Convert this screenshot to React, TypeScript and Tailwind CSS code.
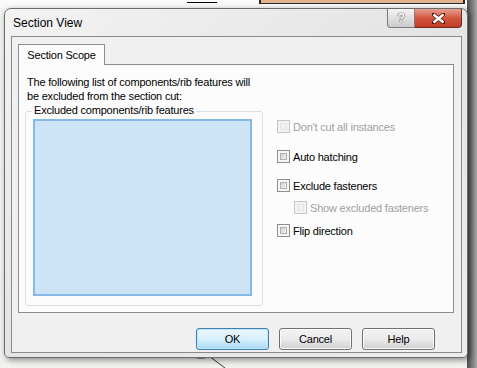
import React from 'react';

const Check: React.FC<{ label: string; disabled?: boolean; className?: string }> = ({ label, disabled, className = '' }) => {
  return (
    <div className={`flex items-center h-[13px] whitespace-nowrap ${className}`}>
      <div
        className={`w-[13px] h-[13px] shrink-0 border p-[2px] ${
          disabled ? 'border-[#c4c4c4] bg-[#f4f4f4]' : 'border-[#8e8f8f] bg-[#f6f6f6]'
        }`}
      >
        <div
          className={`w-full h-full border ${
            disabled
              ? 'border-[#e4e4e4] bg-[#f0f0f0]'
              : 'border-[#aeb0b1] bg-gradient-to-br from-[#cbcfd5] to-[#f6f6f6]'
          }`}
        />
      </div>
      <span className={`ml-[3px] ${disabled ? 'text-[#a0a0a0]' : 'text-black'}`}>{label}</span>
    </div>
  );
};

const Btn: React.FC<{ label: string; primary?: boolean }> = ({ label, primary }) => (
  <div
    className={`w-[73px] h-[22px] rounded-[3px] border flex items-center justify-center ${
      primary
        ? 'border-[#3c7fb1] bg-gradient-to-b from-[#eaf6fd] via-[#d9f0fc] to-[#a7d9f5] shadow-[inset_0_0_0_1px_#bfe6fa]'
        : 'border-[#707070] bg-gradient-to-b from-[#f2f2f2] via-[#ebebeb] to-[#cfcfcf] shadow-[inset_0_0_0_1px_#fcfcfc]'
    }`}
  >
    {label}
  </div>
);

export default function App() {
  return (
    <div className="relative w-[477px] h-[368px] overflow-hidden bg-[#f2f2f0] font-['Liberation_Sans',sans-serif] text-[11px] leading-[14px] tracking-[-0.2px] text-black">
      {/* desktop behind the dialog */}
      <div className="absolute left-0 top-0 w-[477px] h-[8px] bg-[#fafafa]" />
      <div className="absolute left-[187px] top-0 w-[30px] h-[3px] border-b border-black" />
      <div className="absolute left-[259px] top-0 w-[206px] h-[4px] border-x-2 border-b border-[#2a2a2a] bg-[#e3b38f]" />
      <div className="absolute right-0 top-0 w-[10px] h-[368px] bg-gradient-to-r from-[#4e4e4e] via-[#7a7a7a] to-[#a8a8a8]" />
      <svg className="absolute left-[195px] top-[354px]" width="40" height="14" viewBox="0 0 40 14">
        <line x1="2" y1="4" x2="10" y2="4" stroke="#333" strokeWidth="1" />
        <line x1="14" y1="2" x2="30" y2="14" stroke="#333" strokeWidth="1" />
      </svg>

      {/* dialog window */}
      <div className="absolute left-[4px] top-[8px] w-[464px] h-[350px] rounded-t-[7px] rounded-b-[5px] border border-[#6b6b6b] bg-gradient-to-br from-[#f3f3f3] via-[#e4e4e4] to-[#ededed] shadow-[2px_2px_6px_rgba(0,0,0,0.45)] flex flex-col">
        <div className="h-[27px] flex items-start">
          <div className="pl-[8px] pt-[7px] text-[12px] tracking-normal">Section View</div>
          <div className="ml-auto mr-[5px] flex">
            <div className="w-[28px] h-[19px] rounded-bl-[4px] border border-t-0 border-[#7b7b7b] bg-gradient-to-b from-[#f4f4f4] to-[#cbcbcb] flex items-center justify-center text-[13px] font-bold text-white [text-shadow:0_0_1px_#333,0_0_1px_#333]">
              ?
            </div>
            <div className="w-[47px] h-[19px] rounded-br-[4px] border border-t-0 border-l-0 border-[#6d2a20] bg-gradient-to-b from-[#e8a093] via-[#d3553f] to-[#c13b24] flex items-center justify-center">
              <svg width="13" height="11" viewBox="0 0 13 11">
                <path d="M1 1 L12 10 M12 1 L1 10" stroke="#5a1a10" strokeWidth="4" strokeLinecap="square" />
                <path d="M1.5 1.5 L11.5 9.5 M11.5 1.5 L1.5 9.5" stroke="#fff" strokeWidth="2.4" />
              </svg>
            </div>
          </div>
        </div>

        {/* client area */}
        <div className="ml-[6px] mr-[5px] h-[317px] border border-[#8a8a8a] bg-[#f0f0f0] flex flex-col">
          <div className="pl-[6px] pt-[7px]">
            <div className="relative z-10 w-[87px] h-[21px] border border-b-0 border-[#898c95] bg-[#fcfcfc] flex items-center justify-center">
              Section Scope
            </div>
            <div className="-mt-px w-[436px] h-[249px] border border-[#898c95] bg-[#fcfcfc] flex">
              <div className="w-[244px] shrink-0 pl-[6px] pt-[10px] flex flex-col">
                <div className="pl-[2px] whitespace-nowrap">The following list of components/rib features will</div>
                <div className="pl-[2px]">be excluded from the section cut:</div>
                <div className="relative mt-[8px] w-[238px] h-[195px] rounded-[3px] border border-[#d5dfe5] pl-[7px] pt-[7px]">
                  <div className="absolute left-[6px] -top-[9px] px-[2px] bg-[#fcfcfc] whitespace-nowrap">Excluded components/rib features</div>
                  <div className="w-[219px] h-[177px] border-2 border-[#86b9e6] bg-[#cde3f6]" />
                </div>
              </div>
              <div className="ml-[14px] pt-[55px] flex flex-col">
                <Check label="Don't cut all instances" disabled />
                <Check label="Auto hatching" className="mt-[17px]" />
                <Check label="Exclude fasteners" className="mt-[16px]" />
                <Check label="Show excluded fasteners" disabled className="mt-[9px] ml-[17px]" />
                <Check label="Flip direction" className="mt-[10px]" />
              </div>
            </div>
          </div>
          <div className="mt-[15px] flex justify-end gap-[10px] pr-[26px]">
            <Btn label="OK" primary />
            <Btn label="Cancel" />
            <Btn label="Help" />
          </div>
        </div>
      </div>
    </div>
  );
}
